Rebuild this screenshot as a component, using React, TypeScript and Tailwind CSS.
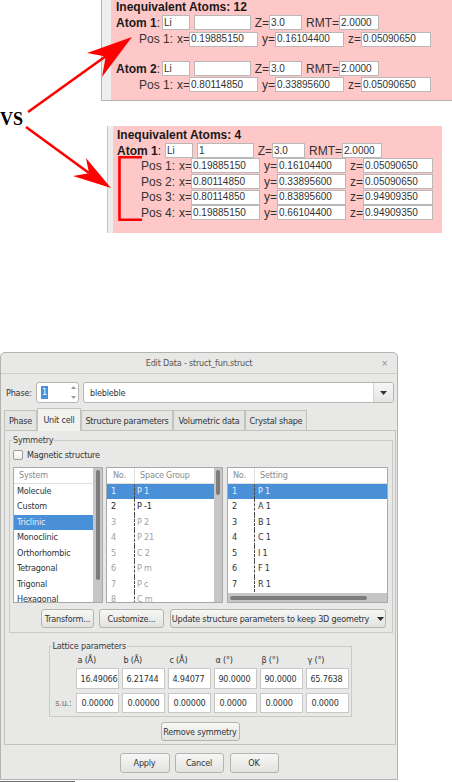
import React from 'react';

type Kids = { children?: React.ReactNode };

// small white entry used in the pink atom panels
function Box({ className = '', children }: { className?: string } & Kids) {
  return (
    <span
      className={`flex h-[15px] shrink-0 items-center overflow-hidden border border-[#b8b8b8] bg-white pl-[1px] text-[10px] leading-none text-[#333] ${className}`}
    >
      {children}
    </span>
  );
}

function AtomRow({ n, second, labelW }: { n: number; second: string; labelW: string }) {
  return (
    <div className="flex h-[15px] items-center">
      <span className={`shrink-0 ${labelW}`}>
        <b>Atom {n}</b>:
      </span>
      <Box className="w-[28px] text-[9px]">Li</Box>
      <Box className="ml-[4px] w-[57px]">{second}</Box>
      <span className="w-[18px] shrink-0 text-right text-[#333]">Z=</span>
      <Box className="w-[33px]">3.0</Box>
      <span className="w-[37px] shrink-0 text-right text-[#333]">RMT=</span>
      <Box className="w-[40px]">2.0000</Box>
    </div>
  );
}

function PosRow({ n, x, y, z, indent }: { n: number; x: string; y: string; z: string; indent: string }) {
  return (
    <div className={`flex h-[15.7px] items-center text-[#333] ${indent}`}>
      <span className="w-[38px] shrink-0">Pos {n}:</span>
      <span className="w-[12px] shrink-0">x=</span>
      <Box className="w-[69px]">{x}</Box>
      <span className="w-[17px] shrink-0 text-right">y=</span>
      <Box className="w-[69px]">{y}</Box>
      <span className="w-[17px] shrink-0 text-right">z=</span>
      <Box className="w-[70px]">{z}</Box>
    </div>
  );
}

function Btn({ className = '', children }: { className?: string } & Kids) {
  return (
    <div
      className={`flex shrink-0 items-center justify-center whitespace-nowrap rounded-[3px] border border-[#b4b4b2] bg-gradient-to-b from-[#f7f7f6] to-[#e2e2e0] text-[#2e3436] ${className}`}
    >
      {children}
    </div>
  );
}

function Caret() {
  return (
    <svg width="7" height="4" viewBox="0 0 7 4" className="shrink-0">
      <path d="M0 0h7L3.5 4z" fill="#2e3436" />
    </svg>
  );
}

const systems = ['Molecule', 'Custom', 'Triclinic', 'Monoclinic', 'Orthorhombic', 'Tetragonal', 'Trigonal', 'Hexagonal'];
const groups = [
  ['1', 'P 1'],
  ['2', 'P -1'],
  ['3', 'P 2'],
  ['4', 'P 21'],
  ['5', 'C 2'],
  ['6', 'P m'],
  ['7', 'P c'],
  ['8', 'C m'],
];
const settings = [
  ['1', 'P 1'],
  ['2', 'A 1'],
  ['3', 'B 1'],
  ['4', 'C 1'],
  ['5', 'I 1'],
  ['6', 'F 1'],
  ['7', 'R 1'],
];
const tabs = [
  { t: 'Phase', w: 'w-[33px]' },
  { t: 'Unit cell', w: 'w-[44px]', on: true },
  { t: 'Structure parameters', w: 'w-[92px]' },
  { t: 'Volumetric data', w: 'w-[72px]' },
  { t: 'Crystal shape', w: 'w-[62px]' },
];
const latHead = ['a (Å)', 'b (Å)', 'c (Å)', 'α (°)', 'β (°)', 'γ (°)'];
const latVal = ['16.49066', '6.21744', '4.94077', '90.0000', '90.0000', '65.7638'];
const latSu = ['0.00000', '0.00000', '0.00000', '0.0000', '0.0000', '0.0000'];

function Comparison() {
  return (
    <div className="relative h-[352px] [font-family:'Liberation_Sans',Arial,sans-serif] text-[12px] leading-[14px] text-[#1a1a1a]">
      {/* 12 inequivalent atoms */}
      <div className="ml-[101px] flex h-[101px] border-b border-l border-[#b4b4b4]">
        <div className="w-[9px] shrink-0 bg-[#eeeeee]" />
        <div className="flex-1 bg-[#ffc8c8] pl-[5px]">
          <div className="font-bold">Inequivalent Atoms: 12</div>
          <div className="mt-[1px]">
            <AtomRow n={1} second="" labelW="w-[46px]" />
          </div>
          <div className="mt-[1.5px]">
            <PosRow n={1} x="0.19885150" y="0.16104400" z="0.05090650" indent="pl-[23px]" />
          </div>
          <div className="mt-[14px]">
            <AtomRow n={2} second="" labelW="w-[46px]" />
          </div>
          <div className="mt-[0.5px]">
            <PosRow n={1} x="0.80114850" y="0.33895600" z="0.05090650" indent="pl-[23px]" />
          </div>
        </div>
      </div>

      <div className="h-[25px] pt-[9px] [font-family:'Liberation_Serif','Times_New_Roman',serif] text-[18px] leading-[18px] font-bold text-black">
        VS
      </div>

      {/* 4 inequivalent atoms */}
      <div className="ml-[107px] flex h-[107px] w-[335px] border-l border-[#c4c4c4]">
        <div className="w-[5px] shrink-0 bg-[#eeeeee]" />
        <div className="flex-1 bg-[#ffc8c8] pl-[4px] pt-[2px]">
          <div className="font-bold">Inequivalent Atoms: 4</div>
          <div className="mt-[1px]">
            <AtomRow n={1} second="1" labelW="w-[48px]" />
          </div>
          <PosRow n={1} x="0.19885150" y="0.16104400" z="0.05090650" indent="pl-[24px]" />
          <PosRow n={2} x="0.80114850" y="0.33895600" z="0.05090650" indent="pl-[24px]" />
          <PosRow n={3} x="0.80114850" y="0.83895600" z="0.94909350" indent="pl-[24px]" />
          <PosRow n={4} x="0.19885150" y="0.66104400" z="0.94909350" indent="pl-[24px]" />
        </div>
      </div>

      {/* red annotations */}
      <svg className="pointer-events-none absolute left-0 top-0" width="452" height="352" viewBox="0 0 452 352">
        <line x1="28" y1="112" x2="106" y2="56" stroke="#ff0000" strokeWidth="2.6" />
        <polygon points="132,37 87,53 105.7,56.6 102,77" fill="#ff0000" />
        <line x1="26" y1="127" x2="89" y2="173" stroke="#ff0000" strokeWidth="2.6" />
        <polygon points="111,188 86,158 89,173.3 73,176" fill="#ff0000" />
        <path d="M142 157.2H119.5V219.7H142" fill="none" stroke="#ff0000" strokeWidth="2.6" />
      </svg>
    </div>
  );
}

function EditDialog() {
  return (
    <div className="w-[398px] whitespace-nowrap rounded-t-[5px] border border-[#b3b3b1] bg-[#e8e8e7] [font-family:'DejaVu_Sans_Condensed','DejaVu_Sans',sans-serif] text-[9px] leading-[12px] tracking-[-0.2px] text-[#2e3436]">
      {/* title bar */}
      <div className="flex h-[21px] items-center border-b border-[#cfcfcd]">
        <span className="w-[22px]" />
        <span className="flex-1 text-center text-[#555753]">Edit Data - struct_fun.struct</span>
        <span className="flex w-[22px] justify-center pr-[3px] text-[9px] text-[#8b8e8f]">×</span>
      </div>

      {/* phase row */}
      <div className="mt-[8px] flex h-[21px] items-center pl-[5px] pr-[3px]">
        <span className="w-[30px] shrink-0">Phase:</span>
        <div className="flex h-full w-[43px] shrink-0 items-center rounded-[3px] border border-[#b6b6b4] bg-white">
          <span className="ml-[4px] bg-[#4a90d9] px-[1px] leading-[13px] text-white">1</span>
          <span className="flex-1" />
          <div className="flex h-full w-[10px] flex-col items-center justify-between py-[3px]">
            <svg width="5" height="3" viewBox="0 0 5 3">
              <path d="M0 3h5L2.5 0z" fill="#9a9a9a" />
            </svg>
            <svg width="5" height="3" viewBox="0 0 5 3">
              <path d="M0 0h5L2.5 3z" fill="#9a9a9a" />
            </svg>
          </div>
        </div>
        <div className="ml-[4px] flex h-full flex-1 overflow-hidden rounded-[3px] border border-[#b6b6b4] bg-white">
          <span className="flex flex-1 items-center pl-[6px]">blebleble</span>
          <div className="flex w-[20px] items-center justify-center border-l border-[#d2d2d0] bg-gradient-to-b from-[#f7f7f6] to-[#e4e4e2]">
            <Caret />
          </div>
        </div>
      </div>

      {/* tabs */}
      <div className="mt-[5px] flex h-[22px] items-end pl-[3px]">
        {tabs.map((tb) => (
          <div
            key={tb.t}
            className={`flex shrink-0 items-center justify-center border border-b-0 border-[#c2c2c0] ${tb.w} ${
              tb.on ? '-mb-px h-[23px] bg-[#f2f2f1]' : 'h-[20px] bg-[#e4e4e3]'
            }`}
          >
            {tb.t}
          </div>
        ))}
      </div>

      {/* tab pane */}
      <div className="ml-[3px] h-[315px] w-[392px] border border-[#c2c2c0] bg-[#e8e8e7] pt-[3px]">
        <fieldset className="ml-[4px] w-[384px] border border-[#cacac8] pb-[4px]">
          <legend className="ml-[2px] px-[1px] leading-[12px] text-[#3a3a3a]">Symmetry</legend>
          <div className="mt-[3px] flex h-[12px] items-center pl-[3px]">
            <span className="h-[10px] w-[10px] rounded-[2px] border border-[#9c9c9a] bg-gradient-to-b from-white to-[#ececec]" />
            <span className="ml-[4px]">Magnetic structure</span>
          </div>

          <div className="mt-[6px] flex h-[136px] pl-[3px]">
            {/* system */}
            <div className="flex w-[90px] overflow-hidden border border-[#a9a9a9] bg-white">
              <div className="min-w-0 flex-1">
                <div className="h-[15.5px] border-b border-[#dedede] pl-[5px] leading-[15px] text-[#8a8a8a]">System</div>
                {systems.map((s) => (
                  <div
                    key={s}
                    className={`h-[15.5px] pl-[3px] leading-[15.5px] ${s === 'Triclinic' ? 'bg-[#4a90d9] text-[#e6eef8]' : ''}`}
                  >
                    {s}
                  </div>
                ))}
              </div>
              <div className="flex w-[9px] justify-center bg-[#c6c6c6] pt-[2px]">
                <div className="h-[110px] w-[4px] rounded-full bg-[#7c7c7c]" />
              </div>
            </div>

            {/* space group */}
            <div className="ml-[3px] flex w-[117px] overflow-hidden border border-[#a9a9a9] bg-white">
              <div className="min-w-0 flex-1">
                <div className="flex h-[15.5px] border-b border-[#dedede] leading-[15px] text-[#8a8a8a]">
                  <span className="w-[27px] pl-[6px]">No.</span>
                  <span className="border-l border-[#dedede] pl-[5px]">Space Group</span>
                </div>
                {groups.map(([no, g], i) => (
                  <div
                    key={no}
                    className={`flex h-[15.5px] leading-[15.5px] ${
                      i === 0 ? 'bg-[#4a90d9] text-[#e6eef8]' : i === 1 ? 'text-[#1c1c1c]' : 'text-[#a2a2a2]'
                    }`}
                  >
                    <span className="w-[27px] pl-[4px]">{no}</span>
                    <span className="border-l border-dashed border-[#4a4a4a] pl-[2px]">{g}</span>
                  </div>
                ))}
              </div>
              <div className="flex w-[8px] justify-center bg-[#c6c6c6] pt-[2px]">
                <div className="h-[25px] w-[4px] rounded-full bg-[#7c7c7c]" />
              </div>
            </div>

            {/* setting */}
            <div className="ml-[4px] flex w-[161px] flex-col overflow-hidden border border-[#a9a9a9] bg-white">
              <div className="flex-1">
                <div className="flex h-[15.5px] border-b border-[#dedede] leading-[15px] text-[#8a8a8a]">
                  <span className="w-[26px] pl-[5px]">No.</span>
                  <span className="border-l border-[#dedede] pl-[5px]">Setting</span>
                </div>
                {settings.map(([no, s], i) => (
                  <div key={no} className={`flex h-[15.5px] leading-[15.5px] ${i === 0 ? 'bg-[#4a90d9] text-[#e6eef8]' : ''}`}>
                    <span className="w-[26px] pl-[4px]">{no}</span>
                    <span className="border-l border-dashed border-[#4a4a4a] pl-[3px]">{s}</span>
                  </div>
                ))}
              </div>
              <div className="flex h-[9px] items-center bg-[#c6c6c6] pl-[2px]">
                <div className="h-[4px] w-[137px] rounded-full bg-[#7c7c7c]" />
              </div>
            </div>
          </div>

          <div className="mt-[6px] flex h-[19px] justify-end pr-[6px]">
            <Btn className="w-[53px]">Transform...</Btn>
            <Btn className="ml-[5px] w-[65px]">Customize...</Btn>
            <Btn className="ml-[6px] w-[216px] gap-[8px]">
              Update structure parameters to keep 3D geometry
              <Caret />
            </Btn>
          </div>
        </fieldset>

        <fieldset className="mx-auto mt-[7px] w-[303px] border border-[#cacac8] pb-[3px]">
          <legend className="ml-[2px] px-[1px] leading-[12px] text-[#3a3a3a]">Lattice parameters</legend>
          <div className="flex h-[15px] items-center gap-x-[3px]">
            <span className="w-[23px]" />
            {latHead.map((h) => (
              <span key={h} className="w-[43px] pl-[2px]">
                {h}
              </span>
            ))}
          </div>
          <div className="mt-[1px] flex h-[21px] gap-x-[3px]">
            <span className="w-[23px]" />
            {latVal.map((v, i) => (
              <span
                key={i}
                className={`flex w-[43px] items-center justify-end overflow-hidden border border-[#c8c8c6] bg-white ${
                  i === 0 ? 'pr-0' : 'pr-[5px]'
                }`}
              >
                {v}
              </span>
            ))}
          </div>
          <div className="mt-[4px] flex h-[20px] gap-x-[3px]">
            <span className="flex w-[23px] items-center justify-end pr-[1px] text-[#6a6a6a]">s.u.:</span>
            {latSu.map((v, i) => (
              <span key={i} className="flex w-[43px] items-center border border-[#c8c8c6] bg-white pl-[5px]">
                {v}
              </span>
            ))}
          </div>
        </fieldset>

        <div className="mt-[5px] flex justify-center">
          <Btn className="h-[19px] w-[79px]">Remove symmetry</Btn>
        </div>
      </div>

      {/* dialog buttons */}
      <div className="mt-[8px] flex h-[20px] justify-center pb-0">
        <Btn className="w-[50px]">Apply</Btn>
        <Btn className="ml-[5px] w-[49px]">Cancel</Btn>
        <Btn className="ml-[6px] w-[49px]">OK</Btn>
      </div>
      <div className="h-[6px]" />
    </div>
  );
}

export default function App() {
  return (
    <div className="h-[782px] w-[452px] overflow-hidden bg-white">
      <Comparison />
      <EditDialog />
      <div className="flex h-[2px] items-end">
        <div className="h-px w-[75px] bg-[#6b6b6b]" />
      </div>
    </div>
  );
}
